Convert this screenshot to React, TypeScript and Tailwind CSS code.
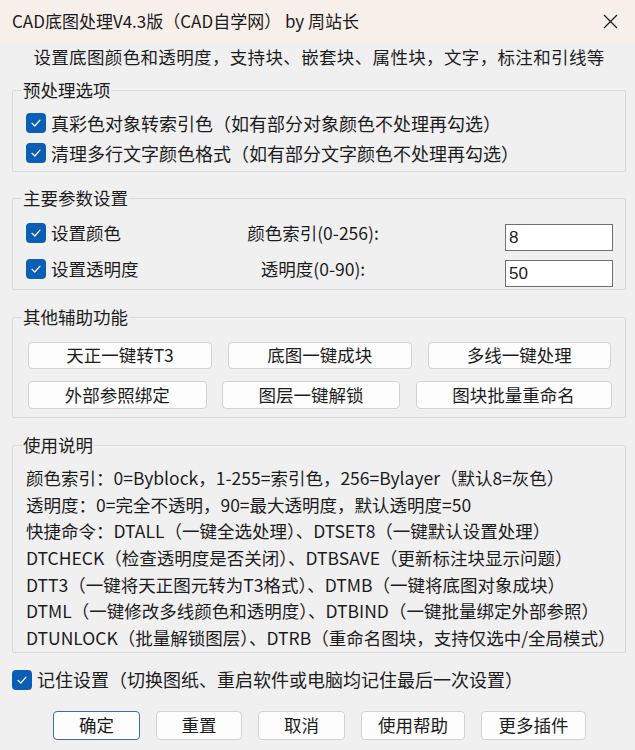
import React, { useState } from 'react';

const font = { fontFamily: '"Noto Sans CJK SC", "Noto Sans", sans-serif' };

const Check: React.FC<{ checked: boolean; onChange: () => void }> = ({ checked, onChange }) => (
    <button
        type="button"
        onClick={onChange}
        className={`w-[20px] h-[20px] shrink-0 rounded-[4px] flex items-center justify-center ${checked ? 'bg-[#0a5fb4]' : 'bg-white border border-[#8a8a8a]'}`}
    >
        {checked && (
            <svg width="12" height="12" viewBox="0 0 12 12" fill="none">
                <path d="M2 6.3 L4.8 9 L10 3.2" stroke="white" strokeWidth="1.2" strokeLinecap="round" strokeLinejoin="round" />
            </svg>
        )}
    </button>
);

const Group: React.FC<{ title: string; className?: string; children: React.ReactNode }> = ({ title, className, children }) => (
    <fieldset className={`border border-[#dadada] rounded-[2px] px-0 ${className ?? ''}`}>
        <legend className="ml-[9px] px-[1px] h-[20px] leading-[20px] text-[17.5px] text-[#1c1c1c]">{title}</legend>
        {children}
    </fieldset>
);

const Btn: React.FC<{ w: string; children: React.ReactNode; primary?: boolean }> = ({ w, children, primary }) => (
    <button
        type="button"
        className={`${w} h-full rounded-[4px] bg-[#fdfdfd] border text-[17.5px] text-[#1c1c1c] flex items-center justify-center ${primary ? 'border-[#3f6d96]' : 'border-[#d3d3d3]'}`}
    >
        {children}
    </button>
);

const usage = [
    '颜色索引：0=Byblock，1-255=索引色，256=Bylayer（默认8=灰色）',
    '透明度：0=完全不透明，90=最大透明度，默认透明度=50',
    '快捷命令：DTALL（一键全选处理）、DTSET8（一键默认设置处理）',
    'DTCHECK（检查透明度是否关闭）、DTBSAVE（更新标注块显示问题）',
    'DTT3（一键将天正图元转为T3格式）、DTMB（一键将底图对象成块）',
    'DTML（一键修改多线颜色和透明度）、DTBIND（一键批量绑定外部参照）',
    'DTUNLOCK（批量解锁图层）、DTRB（重命名图块，支持仅选中/全局模式）',
];

export default function App() {
    const [opts, setOpts] = useState({ trueColor: true, mtext: true, color: true, transp: true, remember: true });
    const [colorIdx, setColorIdx] = useState('8');
    const [transp, setTransp] = useState('50');
    const toggle = (k: keyof typeof opts) => setOpts(prev => ({ ...prev, [k]: !prev[k] }));

    return (
        <div className="w-[635px] h-[750px] bg-[#f0f0f0] text-[#1c1c1c] overflow-hidden" style={font}>
            {/* title bar */}
            <div className="h-[42px] bg-[#f7efea] flex items-center justify-between pl-[12px] pr-[16px]">
                <span className="text-[17px] text-[#1a1a1a]">CAD底图处理V4.3版（CAD自学网） by 周站长</span>
                <svg width="15" height="15" viewBox="0 0 15 15" className="mr-[1px]">
                    <path d="M1 1 L14 14 M14 1 L1 14" stroke="#1a1a1a" strokeWidth="1.2" />
                </svg>
            </div>

            <div className="pl-[12px] pr-[9px]">
                <div className="h-[28px] mt-[1px] flex items-center justify-center text-[17.5px] tracking-[0.35px]">
                    设置底图颜色和透明度，支持块、嵌套块、属性块，文字，标注和引线等
                </div>

                <Group title="预处理选项" className="mt-[9px]">
                    <div className="pl-[13px] pt-[8px] pb-[3px] text-[18px]">
                        <div className="h-[30px] flex items-center gap-[5px]">
                            <Check checked={opts.trueColor} onChange={() => toggle('trueColor')} />
                            <span>真彩色对象转索引色（如有部分对象颜色不处理再勾选）</span>
                        </div>
                        <div className="h-[30px] flex items-center gap-[5px]">
                            <Check checked={opts.mtext} onChange={() => toggle('mtext')} />
                            <span>清理多行文字颜色格式（如有部分文字颜色不处理再勾选）</span>
                        </div>
                    </div>
                </Group>

                <Group title="主要参数设置" className="mt-[16px]">
                    <div className="pl-[13px] pr-[12px] pt-[7px] pb-[2px] text-[17.5px]">
                        <div className="h-[36px] flex items-center">
                            <div className="w-[192px] flex items-center gap-[5px]">
                                <Check checked={opts.color} onChange={() => toggle('color')} />
                                <span>设置颜色</span>
                            </div>
                            <div className="w-[190px] text-center">颜色索引(0-256):</div>
                            <div className="flex-1" />
                            <input
                                value={colorIdx}
                                onChange={e => setColorIdx(e.target.value)}
                                className="self-end w-[108px] h-[27px] bg-white border border-[#6f6f6f] px-[3px] text-[17px] outline-none"
                                style={{ fontFamily: '"Liberation Sans", Arial, sans-serif' }}
                            />
                        </div>
                        <div className="h-[36px] flex items-center">
                            <div className="w-[192px] flex items-center gap-[5px]">
                                <Check checked={opts.transp} onChange={() => toggle('transp')} />
                                <span>设置透明度</span>
                            </div>
                            <div className="w-[190px] text-center">透明度(0-90):</div>
                            <div className="flex-1" />
                            <input
                                value={transp}
                                onChange={e => setTransp(e.target.value)}
                                className="self-end w-[108px] h-[27px] bg-white border border-[#6f6f6f] px-[3px] text-[17px] outline-none"
                                style={{ fontFamily: '"Liberation Sans", Arial, sans-serif' }}
                            />
                        </div>
                    </div>
                </Group>

                <Group title="其他辅助功能" className="mt-[17px]">
                    <div className="pl-[15px] pt-[15px] pb-[8px] flex flex-col gap-[12px]">
                        <div className="h-[27px] flex gap-[15.5px]">
                            <Btn w="w-[184px]">天正一键转T3</Btn>
                            <Btn w="w-[184.5px]">底图一键成块</Btn>
                            <Btn w="w-[183.5px]">多线一键处理</Btn>
                        </div>
                        <div className="h-[28px] flex gap-[15.5px]">
                            <Btn w="w-[178.5px]">外部参照绑定</Btn>
                            <Btn w="w-[178px]">图层一键解锁</Btn>
                            <Btn w="w-[196px]">图块批量重命名</Btn>
                        </div>
                    </div>
                </Group>

                <Group title="使用说明" className="mt-[17px]">
                    <div className="pl-[13px] pt-[10px] text-[17.5px]">
                        {usage.map(line => (
                            <div key={line} className="h-[26.7px] leading-[26.7px] whitespace-nowrap">{line}</div>
                        ))}
                    </div>
                </Group>

                <div className="mt-[17px] h-[20px] flex items-center gap-[5px] text-[18px]">
                    <Check checked={opts.remember} onChange={() => toggle('remember')} />
                    <span>记住设置（切换图纸、重启软件或电脑均记住最后一次设置）</span>
                </div>

                <div className="mt-[21px] h-[29px] flex pl-[41px] gap-[16px]">
                    <Btn w="w-[87px]" primary>确定</Btn>
                    <Btn w="w-[86px]">重置</Btn>
                    <Btn w="w-[87px]">取消</Btn>
                    <Btn w="w-[104px]">使用帮助</Btn>
                    <Btn w="w-[105px]">更多插件</Btn>
                </div>
            </div>
        </div>
    );
}
